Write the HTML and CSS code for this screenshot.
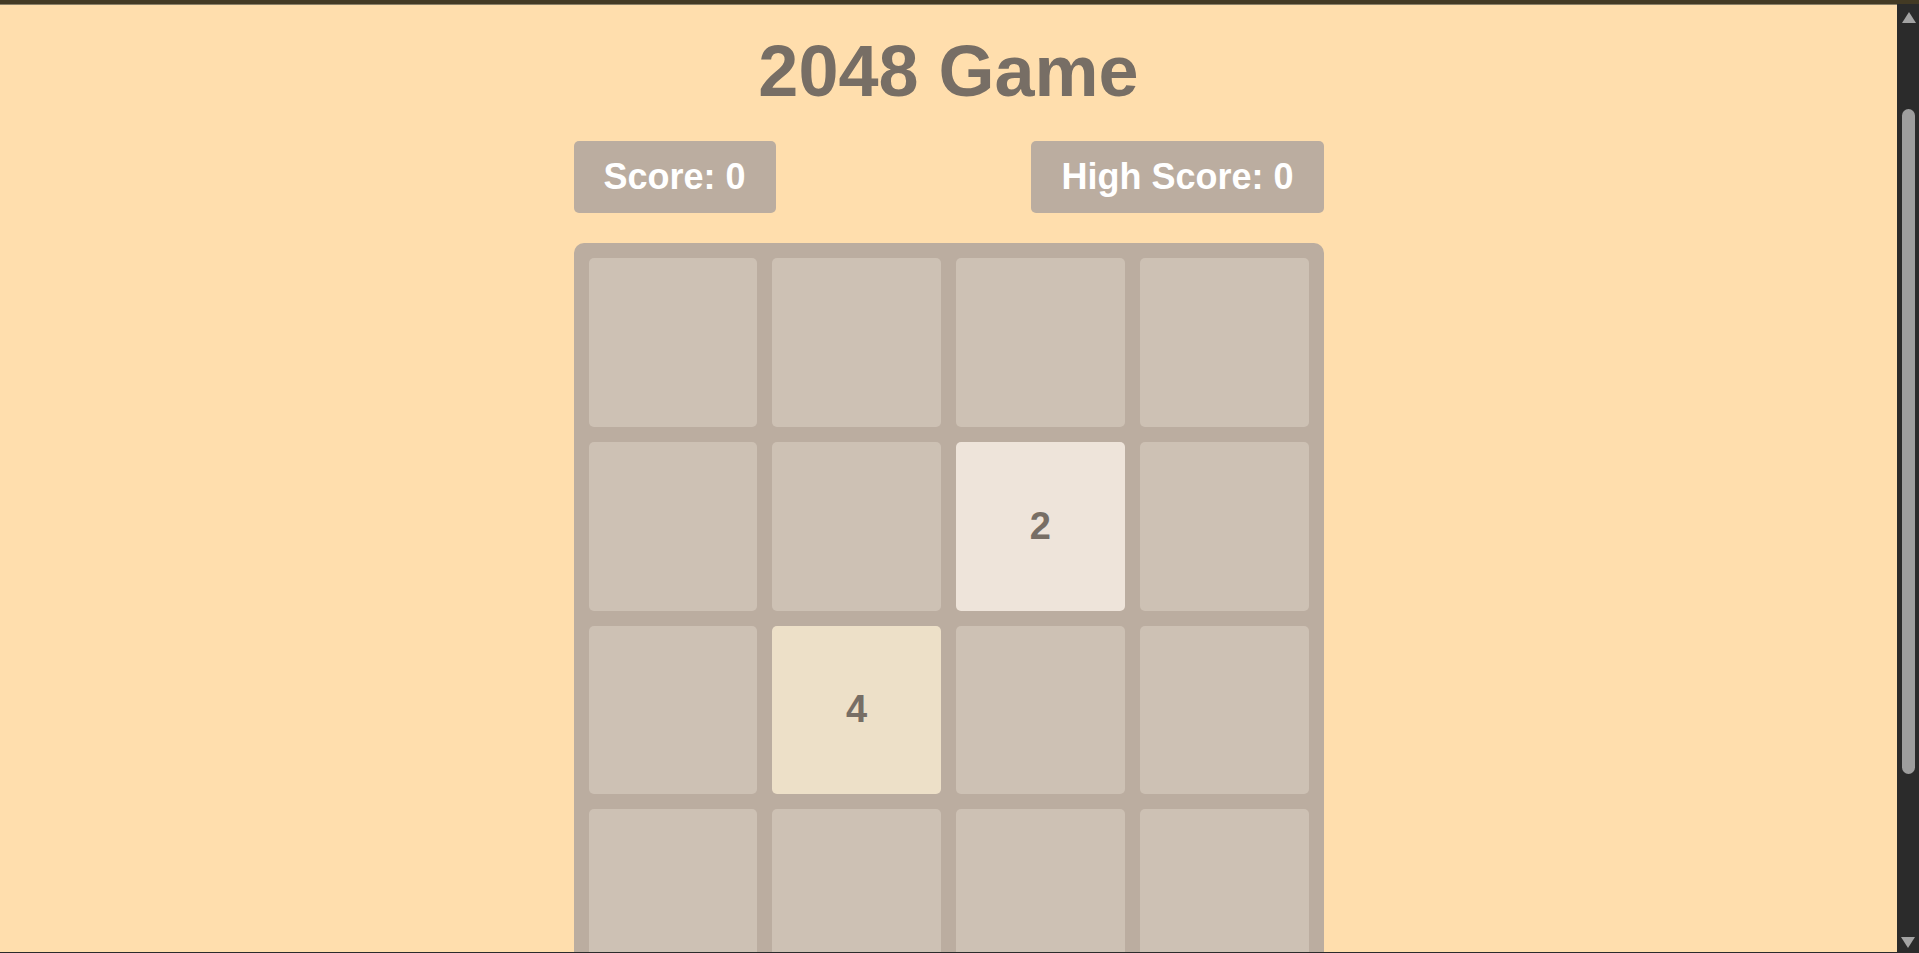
FILE: index.html
```html
<!DOCTYPE html>
<html lang="en">
<head>
    <meta charset="UTF-8">
    <meta name="viewport" content="width=device-width, initial-scale=1.0">
    <title>2048 Game</title>
    <link rel="stylesheet" href="styles.css">
</head>
<body>
    <div class="window-top"></div>
    <div class="window">
        <div class="page">
            <div class="container">
                <h1>2048 Game</h1>

                <div class="scores">
                    <div class="score-box">Score: <span id="score">0</span></div>
                    <div class="score-box">High Score: <span id="highScore">0</span></div>
                </div>

                <div class="board">
                    <div class="cell"></div>
                    <div class="cell"></div>
                    <div class="cell"></div>
                    <div class="cell"></div>

                    <div class="cell"></div>
                    <div class="cell"></div>
                    <div class="cell tile-2">2</div>
                    <div class="cell"></div>

                    <div class="cell"></div>
                    <div class="cell tile-4">4</div>
                    <div class="cell"></div>
                    <div class="cell"></div>

                    <div class="cell"></div>
                    <div class="cell"></div>
                    <div class="cell"></div>
                    <div class="cell"></div>
                </div>
            </div>
        </div>

        <!-- dark scrollbar -->
        <div class="scrollbar">
            <div class="sb-arrow sb-up"></div>
            <div class="sb-thumb"></div>
            <div class="sb-track"></div>
            <div class="sb-arrow sb-down"></div>
        </div>
    </div>
    <div class="window-bottom"></div>
</body>
</html>
```

FILE: styles.css
```css
* {
    margin: 0;
    padding: 0;
    box-sizing: border-box;
    font-family: 'Liberation Sans', Arial, sans-serif;
}

html, body {
    height: 100%;
    overflow: hidden;
}

body {
    display: flex;
    flex-direction: column;
    background: #ffdead;
}

.window-top {
    height: 4px;
    background: #433a24;
    flex-shrink: 0;
}

.window-bottom {
    height: 1px;
    background: #2b2b2b;
    flex-shrink: 0;
}

.window {
    flex: 1;
    display: flex;
    min-height: 0;
}

.page {
    flex: 1;
    overflow: hidden;
    border-top: 1px solid #8a7f66;
    padding-top: 25px;
}

.container {
    width: 750px;
    margin: 0 auto;
}

h1 {
    color: #776e65;
    text-align: center;
    font-size: 72px;
    font-weight: 700;
    line-height: 83px;
}

.scores {
    display: flex;
    justify-content: space-between;
    margin-top: 28px;
}

.score-box {
    background: #bbada0;
    color: white;
    font-size: 36px;
    font-weight: 700;
    line-height: 42px;
    padding: 15px 30px;
    border-radius: 5px;
}

.board {
    margin-top: 30px;
    background: #bbada0;
    border-radius: 10px;
    padding: 15px;
    display: grid;
    grid-template-columns: repeat(4, 1fr);
    gap: 15px;
}

.cell {
    aspect-ratio: 1;
    background: #cdc1b4;
    border-radius: 5px;
    display: flex;
    align-items: center;
    justify-content: center;
    color: #776e65;
    font-size: 38px;
    font-weight: 700;
}

.tile-2 {
    background: #eee4da;
}

.tile-4 {
    background: #ede0c8;
}

/* scrollbar */
.scrollbar {
    width: 22px;
    flex-shrink: 0;
    background: #2b2b2b;
    display: flex;
    flex-direction: column;
    align-items: center;
}

.sb-arrow {
    width: 0;
    height: 0;
    border-left: 7px solid transparent;
    border-right: 7px solid transparent;
}

.sb-up {
    border-bottom: 11px solid #a3a3a3;
    margin-top: 8px;
    margin-left: 1px;
}

.sb-down {
    border-top: 11px solid #a3a3a3;
    margin-bottom: 4px;
}

.sb-thumb {
    width: 13px;
    height: 665px;
    margin-top: 86px;
    background: #9e9e9e;
    border-radius: 7px;
}

.sb-track {
    flex: 1;
}
```
